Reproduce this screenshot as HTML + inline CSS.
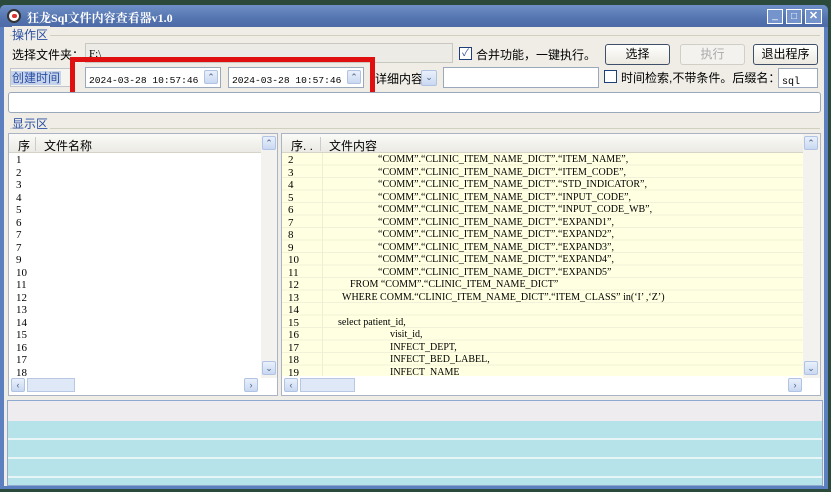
<!DOCTYPE html>
<html><head><meta charset="utf-8"><style>
*{box-sizing:border-box;margin:0;padding:0}
body{width:831px;height:492px;overflow:hidden;background:#2c4a3c;font-family:"Liberation Sans","Noto Sans CJK SC",sans-serif;font-size:12px;color:#000;position:relative}
.a{position:absolute}
.win{left:0;top:5px;width:828px;height:484px;background:#5b7fbf;border-radius:5px 5px 0 0}
.title{left:0;top:5px;width:828px;height:22px;background:linear-gradient(#6f8fc8,#5474b0 60%,#4d6ca6);border-radius:5px 5px 0 0}
.body{left:4px;top:27px;width:820px;height:459px;background:#efede6}
.inp{background:#fff;border:1px solid #9aa8bb}
.btn{background:linear-gradient(#fff,#ece9e0);border:1px solid #3f4f6a;border-radius:3px;text-align:center;line-height:18px;font-size:12px}
.lbl{color:#2b4fa3;font-size:12px}
.cb{width:13px;height:13px;border:1px solid #1e3f7a;background:#fff}
.mono{font-family:"Liberation Mono",monospace;font-size:9.6px;white-space:nowrap}
.ser{font-family:"Liberation Serif","Noto Serif CJK SC",serif;font-size:11px;line-height:12.5px;white-space:pre}
.code div{font-family:"Liberation Serif",serif;font-size:10px;line-height:12.5px;height:12.5px;white-space:pre}
.sb{background:#dfe8f6;border:1px solid #b8c8e4}
.arrow{width:14px;height:14px;background:linear-gradient(#e9f0fb,#c9d8f1);border:1px solid #b1c3e3;border-radius:2px;font-size:9px;text-align:center;line-height:12px;color:#4d6185}
</style></head><body>
<div class="a win"></div>
<div class="a title"></div>
<div class="a" style="left:7px;top:9px;width:14px;height:14px;border-radius:50%;background:#fff;border:2px solid #333"><div style="margin:3px 0 0 3px;width:5px;height:4px;background:#d33;border-radius:2px"></div></div>
<div class="a" style="left:27px;top:9px;color:#fff;font-weight:bold;font-size:12px;font-family:'Liberation Serif','Noto Serif CJK SC',serif">狂龙Sql文件内容查看器v1.0</div>
<div class="a" style="left:767px;top:9px;width:16px;height:15px;background:#7694cc;border:1px solid #fff;color:#fff;font-size:10px;text-align:center;line-height:12px">_</div>
<div class="a" style="left:786px;top:9px;width:16px;height:15px;background:#7694cc;border:1px solid #fff;color:#fff;font-size:10px;text-align:center;line-height:13px">□</div>
<div class="a" style="left:805px;top:9px;width:17px;height:15px;background:#7694cc;border:1px solid #fff;color:#fff;font-size:11px;font-weight:bold;text-align:center;line-height:13px">✕</div>
<div class="a body"></div>
<div class="a" style="left:10px;top:35px;width:810px;border-top:1px solid #d0d0bf"></div>
<div class="a lbl" style="left:12px;top:26px;background:#efede6;padding-right:2px">操作区</div>
<div class="a" style="left:12px;top:46px">选择文件夹：</div>
<div class="a" style="left:85px;top:43px;width:368px;height:20px;background:#ecebe6;border:1px solid #c8c8c0;padding:2px 3px" ><span class="ser">F:\</span></div>
<div class="a cb" style="left:459px;top:47px;font-size:10px;line-height:11px;text-align:center;color:#2b4fa3">✓</div>
<div class="a" style="left:476px;top:46px">合并功能，一键执行。</div>
<div class="a btn" style="left:605px;top:44px;width:65px;height:21px">选择</div>
<div class="a btn" style="left:680px;top:44px;width:65px;height:21px;border-color:#cfcfc5;color:#aaa;background:#f3f2ee">执行</div>
<div class="a btn" style="left:753px;top:44px;width:65px;height:21px">退出程序</div>
<div class="a" style="left:10px;top:68px;width:62px;height:19px;background:#f5f4ef;border:1px solid #c0c4cc"><span style="background:#c5d2ea;color:#2b4fa3;padding:0 1px">创建时间</span><span style="color:#88a;font-size:9px"> ⌄</span></div>
<div class="a inp" style="left:85px;top:67px;width:136px;height:21px;padding:4px 3px" ><span class="mono">2024-03-28 10:57:46</span></div>
<div class="a arrow" style="left:204px;top:70px">⌃</div>
<div class="a inp" style="left:228px;top:67px;width:136px;height:21px;padding:4px 3px" ><span class="mono">2024-03-28 10:57:46</span></div>
<div class="a arrow" style="left:347px;top:70px">⌃</div>
<div class="a" style="left:70px;top:57px;width:305px;height:44px;border:5px solid #e01010"></div>
<div class="a" style="left:375px;top:70px">详细内容</div>
<div class="a arrow" style="left:421px;top:70px;width:16px;height:16px">⌄</div>
<div class="a inp" style="left:443px;top:67px;width:156px;height:21px"></div>
<div class="a cb" style="left:604px;top:70px"></div>
<div class="a" style="left:621px;top:69px">时间检索,不带条件。后缀名：</div>
<div class="a inp" style="left:778px;top:68px;width:40px;height:20px;padding:4px 3px"><span class="mono" style="font-size:10px">sql</span></div>
<div class="a inp" style="left:8px;top:92px;width:813px;height:21px;border-radius:3px"></div>
<div class="a" style="left:10px;top:128px;width:810px;border-top:1px solid #d0d0bf"></div>
<div class="a lbl" style="left:12px;top:115px;background:#efede6;padding-right:2px">显示区</div>
<!-- left list -->
<div class="a" style="left:8px;top:133px;width:270px;height:263px;background:#fff;border:1px solid #aab4c4"></div>
<div class="a" style="left:9px;top:134px;width:252px;height:19px;background:linear-gradient(#fafaf8,#ebeae4);border-bottom:1px solid #d6d3c8"></div>
<div class="a" style="left:18px;top:137px">序</div>
<div class="a" style="left:35px;top:137px;height:14px;border-left:1px solid #ccc"></div>
<div class="a" style="left:44px;top:137px">文件名称</div>
<div class="a ser" style="left:16px;top:154px">1
2
3
4
5
6
7
7
9
10
11
12
13
14
15
16
17
18</div>
<div class="a" style="left:261px;top:134px;width:16px;height:244px;background:#f3f2ee"></div>
<div class="a arrow" style="left:262px;top:136px">⌃</div>
<div class="a arrow" style="left:262px;top:361px">⌄</div>
<div class="a" style="left:9px;top:376px;width:252px;height:19px;background:#fff"></div>
<div class="a arrow" style="left:11px;top:378px">‹</div>
<div class="a sb" style="left:27px;top:378px;width:48px;height:14px"></div>
<div class="a arrow" style="left:244px;top:378px">›</div>
<!-- right -->
<div class="a" style="left:281px;top:133px;width:540px;height:263px;background:#fff;border:1px solid #aab4c4"></div>
<div class="a" style="left:282px;top:134px;width:521px;height:19px;background:linear-gradient(#fafaf8,#ebeae4);border-bottom:1px solid #d6d3c8"></div>
<div class="a" style="left:291px;top:137px">序. .</div>
<div class="a" style="left:320px;top:137px;height:14px;border-left:1px solid #ccc"></div>
<div class="a" style="left:329px;top:137px">文件内容</div>
<div class="a" style="left:282px;top:153px;width:521px;height:223px;background:repeating-linear-gradient(#ffffe1 0,#ffffe1 11.5px,#f2f0d8 11.5px,#f2f0d8 12.5px)"></div>
<div class="a" style="left:322px;top:153px;height:223px;border-left:1px solid #f0eed0"></div>
<div class="a ser" style="left:288px;top:154px;height:222px;overflow:hidden">2
3
4
5
6
7
8
9
10
11
12
13
14
15
16
17
18
19</div>
<div class="a code" style="left:0;top:154px;height:222px;overflow:hidden;width:800px">
<div style="padding-left:378px">“COMM”.“CLINIC_ITEM_NAME_DICT”.“ITEM_NAME”,</div>
<div style="padding-left:378px">“COMM”.“CLINIC_ITEM_NAME_DICT”.“ITEM_CODE”,</div>
<div style="padding-left:378px">“COMM”.“CLINIC_ITEM_NAME_DICT”.“STD_INDICATOR”,</div>
<div style="padding-left:378px">“COMM”.“CLINIC_ITEM_NAME_DICT”.“INPUT_CODE”,</div>
<div style="padding-left:378px">“COMM”.“CLINIC_ITEM_NAME_DICT”.“INPUT_CODE_WB”,</div>
<div style="padding-left:378px">“COMM”.“CLINIC_ITEM_NAME_DICT”.“EXPAND1”,</div>
<div style="padding-left:378px">“COMM”.“CLINIC_ITEM_NAME_DICT”.“EXPAND2”,</div>
<div style="padding-left:378px">“COMM”.“CLINIC_ITEM_NAME_DICT”.“EXPAND3”,</div>
<div style="padding-left:378px">“COMM”.“CLINIC_ITEM_NAME_DICT”.“EXPAND4”,</div>
<div style="padding-left:378px">“COMM”.“CLINIC_ITEM_NAME_DICT”.“EXPAND5”</div>
<div style="padding-left:350px">FROM “COMM”.“CLINIC_ITEM_NAME_DICT”</div>
<div style="padding-left:342px">WHERE COMM.“CLINIC_ITEM_NAME_DICT”.“ITEM_CLASS” in(‘I’ ,‘Z’)</div>
<div></div>
<div style="padding-left:338px">select patient_id,</div>
<div style="padding-left:390px">visit_id,</div>
<div style="padding-left:390px">INFECT_DEPT,</div>
<div style="padding-left:390px">INFECT_BED_LABEL,</div>
<div style="padding-left:390px">INFECT_NAME</div>
</div>
<div class="a" style="left:803px;top:134px;width:17px;height:244px;background:#f3f2ee"></div>
<div class="a arrow" style="left:804px;top:136px">⌃</div>
<div class="a arrow" style="left:804px;top:361px">⌄</div>
<div class="a" style="left:282px;top:376px;width:521px;height:19px;background:#fff"></div>
<div class="a arrow" style="left:284px;top:378px">‹</div>
<div class="a sb" style="left:300px;top:378px;width:55px;height:14px"></div>
<div class="a arrow" style="left:788px;top:378px">›</div>
<!-- bottom -->
<div class="a" style="left:7px;top:400px;width:816px;height:86px;border:1px solid #8fa8cf;background:#eeecee"></div>
<div class="a" style="left:8px;top:421px;width:814px;height:64px;background:repeating-linear-gradient(#b6e2ea 0,#b6e2ea 17px,#e7f5f7 17px,#e7f5f7 19px)"></div>
</body></html>
